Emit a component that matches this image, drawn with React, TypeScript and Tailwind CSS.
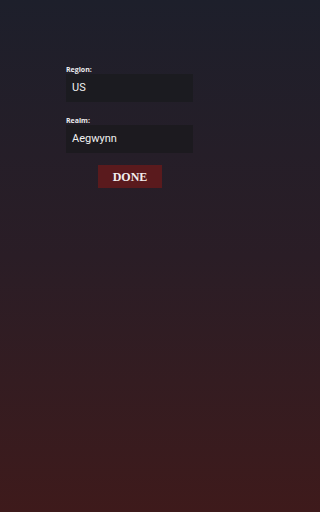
import React from "react";

export default function App() {
  return (
    <div className="h-[512px] w-full bg-gradient-to-b from-[#1d1f2b] via-[#2a1d26] to-[#3e1a1b] flex flex-col font-['Roboto',sans-serif]">
      <div className="pt-[65px] pl-[66px] flex flex-col">
        <label className="text-[7px] font-bold text-[#ececee] leading-[10px] h-[9px] font-['Open_Sans',sans-serif]">Region:</label>
        <div className="w-[127px] h-[28px] bg-[#1b1b20] flex items-center pl-[6px] text-[11px] text-[#f0f0f0]">US</div>
        <label className="mt-[14px] text-[7px] font-bold text-[#ececee] leading-[10px] h-[9px] font-['Open_Sans',sans-serif]">Realm:</label>
        <div className="w-[127px] h-[28px] bg-[#1c1a1f] flex items-center pl-[6px] text-[11px] text-[#f0f0f0]">Aegwynn</div>
        <div className="mt-[12px] ml-[32px] w-[64px] h-[23px] bg-[#5a1a1d] flex items-center justify-center text-[12px] font-bold text-[#f2eeee] font-['Liberation_Serif',serif]">DONE</div>
      </div>
    </div>
  );
}
